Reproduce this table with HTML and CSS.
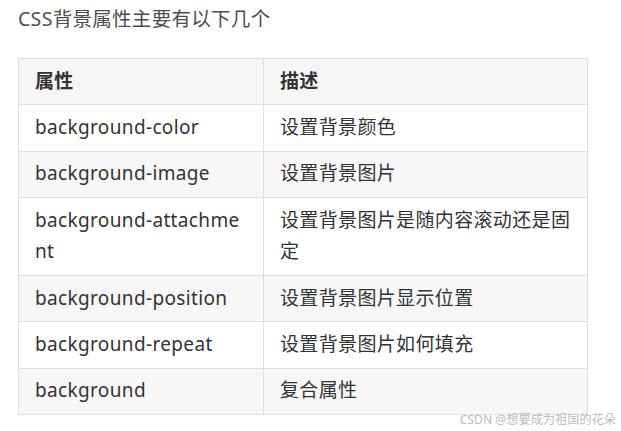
FILE: index.html
```html
<!DOCTYPE html>
<html lang="zh-CN">
<head>
<meta charset="utf-8">
<link rel="stylesheet" href="styles.css">
</head>
<body>
<div class="topbar"></div>
<main class="article">
  <p class="lead">CSS背景属性主要有以下几个</p>
  <table class="props">
    <thead>
      <tr><th class="c1">属性</th><th class="c2">描述</th></tr>
    </thead>
    <tbody>
      <tr><td>background-color</td><td>设置背景颜色</td></tr>
      <tr><td>background-image</td><td>设置背景图片</td></tr>
      <tr><td>background-attachment</td><td>设置背景图片是随内容滚动还是固定</td></tr>
      <tr><td>background-position</td><td>设置背景图片显示位置</td></tr>
      <tr><td>background-repeat</td><td>设置背景图片如何填充</td></tr>
      <tr><td>background</td><td>复合属性</td></tr>
    </tbody>
  </table>
</main>
<div class="watermark">CSDN @想要成为祖国的花朵</div>
</body>
</html>
```

FILE: styles.css
```css
html, body {
  margin: 0;
  padding: 0;
  background: #ffffff;
}
body {
  width: 621px;
  height: 431px;
  overflow: hidden;
  position: relative;
  font-family: "Noto Sans", "Noto Sans CJK SC", sans-serif;
  color: #333333;
}
.topbar {
  height: 0;
  width: 610px;
  box-shadow: 0 1px 8px rgba(0, 0, 0, 0.16);
}
.article {
  padding: 0 33px 0 18px;
}
.lead {
  margin: 0;
  padding-top: 5px;
  font-size: 19.5px;
  line-height: 28px;
  letter-spacing: 0.3px;
  color: #4d4d4d;
}
.props {
  margin-top: 25px;
  border-collapse: collapse;
  width: 570px;
  table-layout: fixed;
  font-size: 19px;
  line-height: 31.67px;
}
.props th, .props td {
  border: 1px solid #dde0e3;
  padding: 6.84px 16px 6.84px 16px;
  text-align: left;
  vertical-align: top;
  word-break: break-all;
  letter-spacing: 0.35px;
}
.props th {
  font-weight: bold;
  background: #f6f6f6;
  color: #333333;
}
.props .c1 { width: 212px; }
.props tbody tr:nth-child(2n) td {
  background: #f7f7f7;
}
.watermark {
  position: absolute;
  right: 5px;
  bottom: 4px;
  font-size: 12.2px;
  line-height: 14px;
  color: #bdbdbd;
  font-family: "Noto Sans", "Noto Sans CJK SC", sans-serif;
}
```
